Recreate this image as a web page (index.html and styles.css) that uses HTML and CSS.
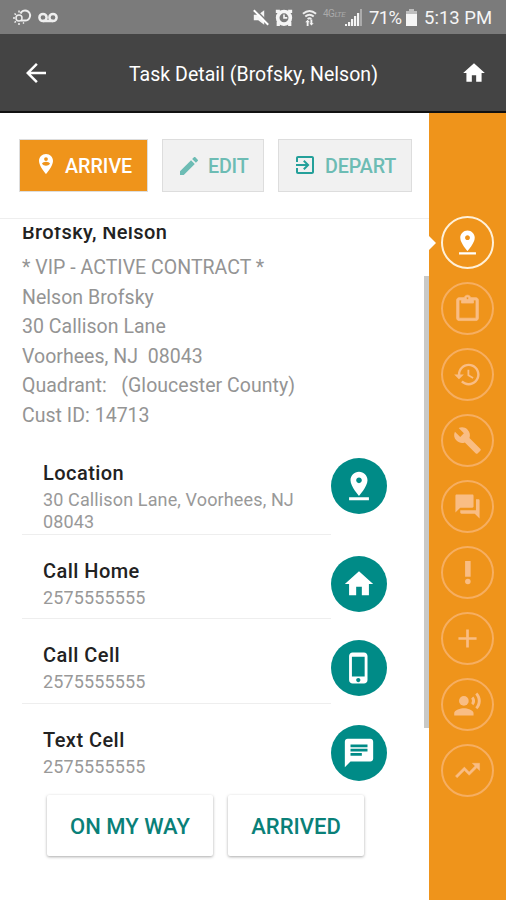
FILE: index.html
```html
<!DOCTYPE html>
<html lang="en">
<head>
<meta charset="utf-8">
<title>Task Detail</title>
<link rel="stylesheet" href="styles.css">
</head>
<body>
<svg width="0" height="0" class="defs">
  <symbol id="pin" viewBox="0 0 24 24"><path d="M18 8c0-3.310-2.690-6-6-6S6 4.690 6 8c0 4.500 6 11 6 11s6-6.500 6-11zm-8 0c0-1.100.9-2 2-2s2 .9 2 2-.89 2-2 2-2-.9-2-2zM5 20v2h14v-2H5z"/></symbol>
  <symbol id="home" viewBox="0 0 24 24"><path d="M10 20v-6h4v6h5v-8h3L12 3 2 12h3v8z"/></symbol>
</svg>

<div class="status">
  <svg class="weather" viewBox="0 0 20 16"><g fill="none" stroke="#eee" stroke-width="1.500"><circle cx="7" cy="9" r="3"/><path d="M7 3.500V1.500M7 14v2M1 9h2M2.500 4.500l1.500 1.300M2.500 13.500L4 12.300M11 13.500l1 1"/><path d="M8.500 4.500A5 5 0 1 1 12.500 11.500H9" stroke-width="2"/></g></svg>
  <svg class="voicemail" viewBox="0 0 20 11"><g fill="none" stroke="#eee" stroke-width="2.500"><circle cx="5" cy="5.500" r="3.600"/><circle cx="15" cy="5.500" r="3.600"/><path d="M5 9h10"/></g></svg>
  <div class="spacer"></div>
  <svg class="mute" viewBox="2 2 20 20"><path d="M3 8.500h5.500L16 3v18l-7.500-5.500H3z"/><path d="M4.500 1.500l18 18" stroke="#7b7b7b" stroke-width="2"/><path d="M3 3l18 18" stroke="#fff" stroke-width="2.400"/></svg>
  <svg class="alarm" viewBox="1 1 22 22"><path fill-rule="evenodd" d="M12 3a10 10 0 1 0 0 20 10 10 0 0 0 0-20zm0 4.500a5.500 5.500 0 1 1 0 11 5.500 5.500 0 0 1 0-11zm-1 1.500v5h5v-2h-3V9z"/><path d="M3 18h4v5H3zM17 18h4v5h-4zM2 3h5v4H2zM17 3h5v4h-5z"/></svg>
  <svg class="wifi" viewBox="0 0 16 18"><g fill="none" stroke="#eee" stroke-width="2"><path d="M1 5Q8-1 15 5M3.500 8Q8 4 12.500 8M6 10.500Q8 9 10 10.500"/></g><path d="M3.500 14L6 11.500 8.500 14H7v4H5v-4zM9 11h2v4h1.500L10 17.500 8 15h1z"/></svg>
  <span class="lte">4G<i>LTE</i></span>
  <svg class="signal" viewBox="0 0 18 17"><path d="M0 17v-2h2v2zM3 17v-4h2.200v4zM6 17v-7h2.200v7zM9 17V7h2.200v10zM12 17V4h2.200v13z"/><path d="M15 17V0h2v17z" opacity=".4"/></svg>
  <span class="pct">71%</span>
  <svg class="battery" viewBox="0 0 11 17"><path d="M3 0h5v2h3v3H0V2h3z" opacity=".55"/><path d="M0 5h11v12H0z"/></svg>
  <span class="clock">5:13 PM</span>
</div>

<header class="appbar">
  <svg class="back" viewBox="4 4 16 16"><path d="M20 11H7.830l5.590-5.590L12 4l-8 8 8 8 1.410-1.410L7.830 13H20v-2z"/></svg>
  <h1>Task Detail (Brofsky, Nelson)</h1>
  <svg class="home"><use href="#home"/></svg>
</header>

<div class="body">
  <main>
    <div class="toolbar">
      <button class="tool primary"><svg class="tpin" viewBox="4 2 16 20"><path fill-rule="evenodd" d="M12 2C8 2 5 5 5 8.900 5 14.100 12 22 12 22s7-7.900 7-13.100C19 5 16 2 12 2zm0 3.200a1.900 1.900 0 1 1 0 3.800 1.900 1.900 0 0 1 0-3.800zM8 11.700c0-1.300 2.700-2 4-2s4 .7 4 2c-.9 1.200-2.400 2-4 2s-3.100-.8-4-2z"/></svg><span>ARRIVE</span></button>
      <button class="tool edit"><svg class="pencil" viewBox="3 3 18 18"><path d="M3 17.250V21h3.750L17.810 9.940l-3.750-3.750L3 17.250zM20.710 7.040c.39-.39.39-1.020 0-1.410l-2.340-2.340c-.39-.39-1.020-.39-1.410 0l-1.830 1.830 3.750 3.750 1.830-1.830z"/></svg><span>EDIT</span></button>
      <button class="tool depart"><svg class="exit" viewBox="3 3 18 18"><path d="M10.090 15.590L11.500 17l5-5-5-5-1.410 1.410L12.670 11H3v2h9.670l-2.580 2.590zM19 3H5c-1.110 0-2 .9-2 2v4h2V5h14v14H5v-4H3v4c0 1.100.89 2 2 2h14c1.100 0 2-.9 2-2V5c0-1.100-.9-2-2-2z"/></svg><span>DEPART</span></button>
    </div>
    <div class="scroll">
      <section class="customer">
        <h2>Brofsky, Nelson</h2>
        <p>* VIP - ACTIVE CONTRACT *</p>
        <p>Nelson Brofsky</p>
        <p>30 Callison Lane</p>
        <p>Voorhees, NJ&nbsp; 08043</p>
        <p>Quadrant:&nbsp;&nbsp; (Gloucester County)</p>
        <p>Cust ID: 14713</p>
      </section>
      <section class="contacts">
        <div class="row tall"><div class="info"><h3>Location</h3><p>30 Callison Lane, Voorhees, NJ<br>08043</p></div><span class="action"><svg><use href="#pin"/></svg></span></div>
        <div class="row"><div class="info"><h3>Call Home</h3><p>2575555555</p></div><span class="action"><svg><use href="#home"/></svg></span></div>
        <div class="row"><div class="info"><h3>Call Cell</h3><p>2575555555</p></div><span class="action"><svg viewBox="0 0 24 24"><path d="M15.500 1h-8C6.120 1 5 2.120 5 3.500v17C5 21.880 6.120 23 7.500 23h8c1.380 0 2.500-1.120 2.500-2.500v-17C18 2.120 16.880 1 15.500 1zm-4 21c-.83 0-1.500-.67-1.500-1.500s.67-1.500 1.500-1.500 1.500.67 1.500 1.500-.67 1.500-1.500 1.500zm4.500-4H7V4h9v14z"/></svg></span></div>
        <div class="row last"><div class="info"><h3>Text Cell</h3><p>2575555555</p></div><span class="action"><svg viewBox="0 0 24 24"><path d="M20 2H4c-1.100 0-1.990.9-1.990 2L2 22l4-4h14c1.100 0 2-.9 2-2V4c0-1.100-.9-2-2-2zM6 9h12v2H6V9zm8 5H6v-2h8v2zm4-6H6V6h12v2z"/></svg></span></div>
      </section>
      <div class="replies"><button class="way">ON MY WAY</button><button class="arrived">ARRIVED</button></div>
      <div class="thumb"></div>
    </div>
  </main>
  <nav class="rail">
    <a class="on"><svg><use href="#pin"/></svg></a>
    <a><svg viewBox="0 0 24 24"><path d="M19 3h-4.180C14.400 1.840 13.300 1 12 1s-2.400.84-2.820 2H5c-1.100 0-2 .9-2 2v15c0 1.100.9 2 2 2h14c1.100 0 2-.9 2-2V5c0-1.100-.9-2-2-2zm-7-.5c.55 0 1 .45 1 1s-.45 1-1 1-1-.45-1-1 .45-1 1-1zM19 20H5V5h2v2.500h10V5h2v15z" stroke="currentColor" stroke-width=".6"/></svg></a>
    <a><svg viewBox="0 0 24 24"><path d="M13 3c-4.970 0-9 4.030-9 9H1l3.890 3.890.07.14L9 12H6c0-3.870 3.130-7 7-7s7 3.130 7 7-3.130 7-7 7c-1.930 0-3.680-.79-4.940-2.060l-1.420 1.420C8.270 19.990 10.510 21 13 21c4.970 0 9-4.030 9-9s-4.030-9-9-9zm-1 5v5l4.280 2.540.72-1.210-3.500-2.080V8H12z"/></svg></a>
    <a><svg viewBox="0 0 24 24"><path d="M22.700 19l-9.100-9.100c.9-2.300.4-5-1.500-6.900-2-2-5-2.400-7.400-1.300L9 6 6 9 1.600 4.700C.4 7.100.9 10.100 2.900 12.100c1.900 1.900 4.600 2.400 6.900 1.500l9.100 9.100c.4.400 1 .4 1.400 0l2.300-2.300c.5-.4.500-1.100.1-1.400z"/></svg></a>
    <a><svg viewBox="0 0 24 24"><path d="M21 6h-2v9H6v2c0 .55.45 1 1 1h11l4 4V7c0-.55-.45-1-1-1zm-4 6V3c0-.55-.45-1-1-1H3c-.55 0-1 .45-1 1v14l4-4h10c.55 0 1-.45 1-1z"/></svg></a>
    <a><svg viewBox="0 0 24 24"><circle cx="12.300" cy="19.500" r="2.300"/><path d="M10 2.500h4.600v13H10z"/></svg></a>
    <a><svg viewBox="0 0 24 24"><path d="M19.500 13.100h-6.400v6.400h-2.200v-6.400H4.500v-2.200h6.400V4.500h2.200v6.400h6.400z"/></svg></a>
    <a><svg viewBox="0 0 24 24"><circle cx="9" cy="9" r="4"/><path d="M9 15c-2.670 0-8 1.340-8 4v2h16v-2c0-2.660-5.330-4-8-4zm7.760-9.640l-1.680 1.690c.84 1.180.84 2.710 0 3.890l1.680 1.690c2.020-2.020 2.020-5.070 0-7.270zM20.070 2l-1.630 1.630c2.770 3.020 2.770 7.560 0 10.740L20.070 16c3.900-3.890 3.910-9.950 0-14z"/></svg></a>
    <a><svg viewBox="0 0 24 24"><path d="M16 6l2.290 2.290-4.880 4.880-4-4L2 16.590 3.410 18l6-6 4 4 6.300-6.290L22 12V6z" stroke="currentColor" stroke-width=".4"/></svg></a>
  </nav>
</div>
</body>
</html>
```
FILE: styles.css
```css
* { box-sizing: border-box; margin: 0; padding: 0; }
body { width: 506px; height: 900px; overflow: hidden; font-family: Roboto, sans-serif; background: #fff; }
svg { display: block; flex: none; fill: currentColor; }
.defs { position: absolute; }
button { font: inherit; border: 0; }
span, h1, h2, h3, p, button { white-space: nowrap; }

.status { height: 34px; display: flex; align-items: center; background: #7b7b7b; color: #f5f5f5; padding: 0 15px 0 12px; }
.weather { width: 20px; height: 16px; margin-right: 6px; }
.voicemail { width: 20px; height: 11px; }
.spacer { flex: 1; }
.mute { width: 16px; height: 17px; margin-right: 6px; }
.alarm { width: 18px; height: 18px; margin-right: 9px; }
.wifi { width: 15px; height: 17px; margin-right: 6px; }
.lte { width: 22px; font-size: 10px; color: #aaa; align-self: flex-start; padding-top: 8px; letter-spacing: -.5px; }
.lte i { font-size: 8px; }
.signal { width: 18px; height: 17px; margin-right: 6px; }
.pct { width: 34px; font-size: 18.500px; letter-spacing: -.6px; margin-right: 3px; padding-top: 1px; }
.battery { width: 11px; height: 17px; margin-right: 7px; }
.clock { width: 67px; font-size: 18.500px; padding-top: 1px; }

.appbar { height: 79px; display: flex; align-items: center; justify-content: space-between; background: #444; color: #fff; border-bottom: 2px solid #111; padding: 2px 19px 0 26px; }
.back { width: 20px; height: 20px; margin-top: -1px; }
.appbar h1 { font-size: 19.500px; font-weight: 400; letter-spacing: .03px; padding-top: 1px; }
.home { width: 26px; height: 26px; margin-top: -1px; }

.body { display: flex; height: 787px; }
main { width: 429px; display: flex; flex-direction: column; }
.toolbar { height: 106px; display: flex; align-items: flex-start; padding: 26px 0 0 19px; border-bottom: 1px solid #eee; flex: none; }
.tool { height: 53px; display: flex; align-items: center; background: #f1f1f1; border: 1px solid #ddd; color: #6dbcb4; font-size: 19.700px; font-weight: 500; }
.tool span { padding-top: 2px; }
.tool.primary { width: 129px; background: #ef941b; color: #fff; margin-right: 14px; padding-left: 18px; }
.edit { width: 102px; margin-right: 14px; padding-left: 17px; }
.depart { width: 134px; padding-left: 17px; }
.tpin { width: 16px; height: 20px; margin: -3px 11px 0 0; }
.pencil { width: 18px; height: 18px; margin-right: 10px; }
.edit span { letter-spacing: -.2px; }
.depart span { letter-spacing: -.1px; }
.exit { width: 18px; height: 18px; margin: -1px 11px 0 0; color: #24a09a; }

.scroll { position: relative; flex: 1; overflow: hidden; margin-top: 8px; }
.customer { padding: 0 0 0 22px; margin-top: -9px; }
.customer h2 { font-size: 20px; font-weight: 500; letter-spacing: .4px; line-height: 28px; color: #222; margin-bottom: 7px; }
.customer p { font-size: 19.500px; letter-spacing: .03px; line-height: 29.500px; color: #949494; }
.contacts { padding: 20px 0 0 22px; }
.row { height: 84.500px; display: flex; padding-top: 21px; }
.row.tall { height: 84.500px; padding-top: 8px; }
.info { width: 309px; padding-left: 21px; border-bottom: 1px solid #eee; margin-top: -21px; padding-top: 21px; }
.last .info { border: 0; }
.info h3 { font-size: 20px; font-weight: 500; letter-spacing: .45px; line-height: 31px; color: #222; }
.info p { font-size: 18px; letter-spacing: .13px; line-height: 21.500px; color: #999; }
.action { width: 56px; height: 56px; border-radius: 50%; background: #008b87; color: #fff; display: flex; align-items: center; justify-content: center; }
.action svg { width: 34px; height: 34px; }
.replies { display: flex; gap: 15px; padding-left: 47px; margin-top: 7px; }
.replies button { height: 61px; padding-top: 1px; background: #fff; color: #0a8078; font-size: 22px; font-weight: 500; border-radius: 2px; box-shadow: 0 1px 3px #aaa; }
.way { width: 166px; }
.arrived { width: 136px; }
.thumb { position: absolute; right: 0; top: 49px; width: 5px; height: 452px; background: #c9c9c7; }

.rail { flex: 1; background: #ef941b; padding: 103px 0 0 12px; display: flex; flex-direction: column; gap: 13px; }
.rail a { position: relative; width: 53px; height: 53px; border: 2px solid #f6ae60; border-radius: 50%; color: #f9bd84; display: flex; align-items: center; justify-content: center; flex: none; }
.rail svg { width: 29px; height: 29px; }
.rail .on { color: #fff; border: 2px solid #fff0d8; }
.rail .on::before { content: ""; position: absolute; left: -14px; top: 18px; border: 7px solid transparent; border-left-color: #fff; border-right: 0; }
```
